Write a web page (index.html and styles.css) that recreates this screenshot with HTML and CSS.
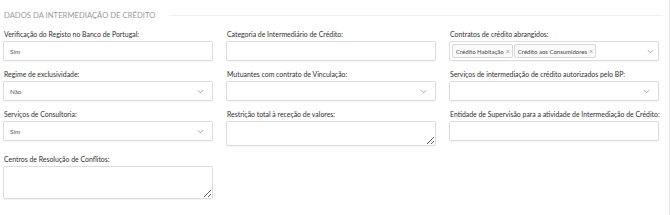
FILE: index.html
```html
<!DOCTYPE html>
<html lang="pt">
<head>
<meta charset="utf-8">
<link rel="stylesheet" href="styles.css">
</head>
<body>
<div class="page">
  <div class="section-head">
    <span class="section-title">Dados da intermediação de crédito</span>
    <span class="section-rule"></span>
  </div>
  <div class="grid">
    <div class="field">
      <label class="lbl">Verificação do Registo no Banco de Portugal:</label>
      <div class="ctl"><span class="val">Sim</span></div>
    </div>
    <div class="field">
      <label class="lbl">Categoria de Intermediário de Crédito:</label>
      <div class="ctl"></div>
    </div>
    <div class="field">
      <label class="lbl">Contratos de crédito abrangidos:</label>
      <div class="ctl multi">
        <span class="tag">Crédito Habitação <span class="x">×</span></span>
        <span class="tag">Crédito aos Consumidores <span class="x">×</span></span>
        <svg class="chev" viewBox="0 0 8 5" width="7" height="5"><path d="M1 1 L4 4 L7 1" fill="none" stroke="#888" stroke-width="0.9"/></svg>
      </div>
    </div>

    <div class="field">
      <label class="lbl">Regime de exclusividade:</label>
      <div class="ctl sel"><span class="val">Não</span><svg class="chev" viewBox="0 0 8 5" width="7" height="5"><path d="M1 1 L4 4 L7 1" fill="none" stroke="#888" stroke-width="0.9"/></svg></div>
    </div>
    <div class="field">
      <label class="lbl">Mutuantes com contrato de Vinculação:</label>
      <div class="ctl sel"><span class="val"></span><svg class="chev" viewBox="0 0 8 5" width="7" height="5"><path d="M1 1 L4 4 L7 1" fill="none" stroke="#888" stroke-width="0.9"/></svg></div>
    </div>
    <div class="field">
      <label class="lbl">Serviços de intermediação de crédito autorizados pelo BP:</label>
      <div class="ctl sel"><span class="val"></span><svg class="chev" viewBox="0 0 8 5" width="7" height="5"><path d="M1 1 L4 4 L7 1" fill="none" stroke="#888" stroke-width="0.9"/></svg></div>
    </div>

    <div class="field">
      <label class="lbl">Serviços de Consultoria:</label>
      <div class="ctl sel"><span class="val">Sim</span><svg class="chev" viewBox="0 0 8 5" width="7" height="5"><path d="M1 1 L4 4 L7 1" fill="none" stroke="#888" stroke-width="0.9"/></svg></div>
    </div>
    <div class="field">
      <label class="lbl">Restrição total à receção de valores:</label>
      <textarea class="ctl area short"></textarea>
    </div>
    <div class="field">
      <label class="lbl">Entidade de Supervisão para a atividade de Intermediação de Crédito:</label>
      <div class="ctl"></div>
    </div>

    <div class="field">
      <label class="lbl">Centros de Resolução de Conflitos:</label>
      <textarea class="ctl area tall"></textarea>
    </div>
  </div>
</div>
</body>
</html>
```

FILE: styles.css
```css
html, body {
  margin: 0;
  padding: 0;
  background: #fff;
}
body {
  font-family: Lato, "Liberation Sans", sans-serif;
  color: #333;
}
.page {
  width: 669px;
  height: 215px;
  border-right: 1px solid #e6e6e6;
  box-sizing: content-box;
  padding: 0;
  overflow: hidden;
}
.section-head {
  display: flex;
  align-items: center;
  padding: 10px 6px 0 4px;
  height: 10px;
}
.section-title {
  font-size: 7.6px;
  text-transform: uppercase;
  color: #9a9a9a;
  letter-spacing: 0.05px;
  white-space: nowrap;
}
.section-rule {
  flex: 1;
  height: 1px;
  background: #f0f0f0;
  margin-left: 14px;
}
.grid {
  display: grid;
  grid-template-columns: repeat(3, 210px);
  column-gap: 13px;
  row-gap: 9px;
  padding: 10px 0 0 3px;
  align-items: start;
}
.field {
  display: flex;
  flex-direction: column;
}
.lbl {
  font-size: 6.9px;
  line-height: 9px;
  color: #2f2f2f;
  margin: 0 0 2px 1px;
  white-space: nowrap;
}
.ctl {
  box-sizing: border-box;
  height: 20px;
  border: 1px solid #dcdcdc;
  border-radius: 2px;
  background: #fff;
  box-shadow: 0 1px 1px rgba(0,0,0,0.04);
  display: flex;
  align-items: center;
  padding: 0 6px;
  font-family: inherit;
}
.val {
  font-size: 6.3px;
  color: #555;
  flex: 1;
}
.sel .chev, .multi .chev {
  margin-left: auto;
  margin-right: 2px;
}
.multi {
  padding: 0 2px;
  gap: 1px;
}
.tag {
  display: inline-flex;
  align-items: center;
  height: 14px;
  box-sizing: border-box;
  padding: 0 2px 0 3px;
  border: 1px solid #d8d8d8;
  border-radius: 2px;
  background: #fafafa;
  font-size: 6px;
  color: #444;
  white-space: nowrap;
}
.tag .x {
  color: #999;
  font-size: 7px;
  margin-left: 2px;
}
.area {
  resize: vertical;
  display: block;
  width: 100%;
  margin: 0;
}
.area.short { height: 25px; }
.area.tall { height: 33px; }
```
